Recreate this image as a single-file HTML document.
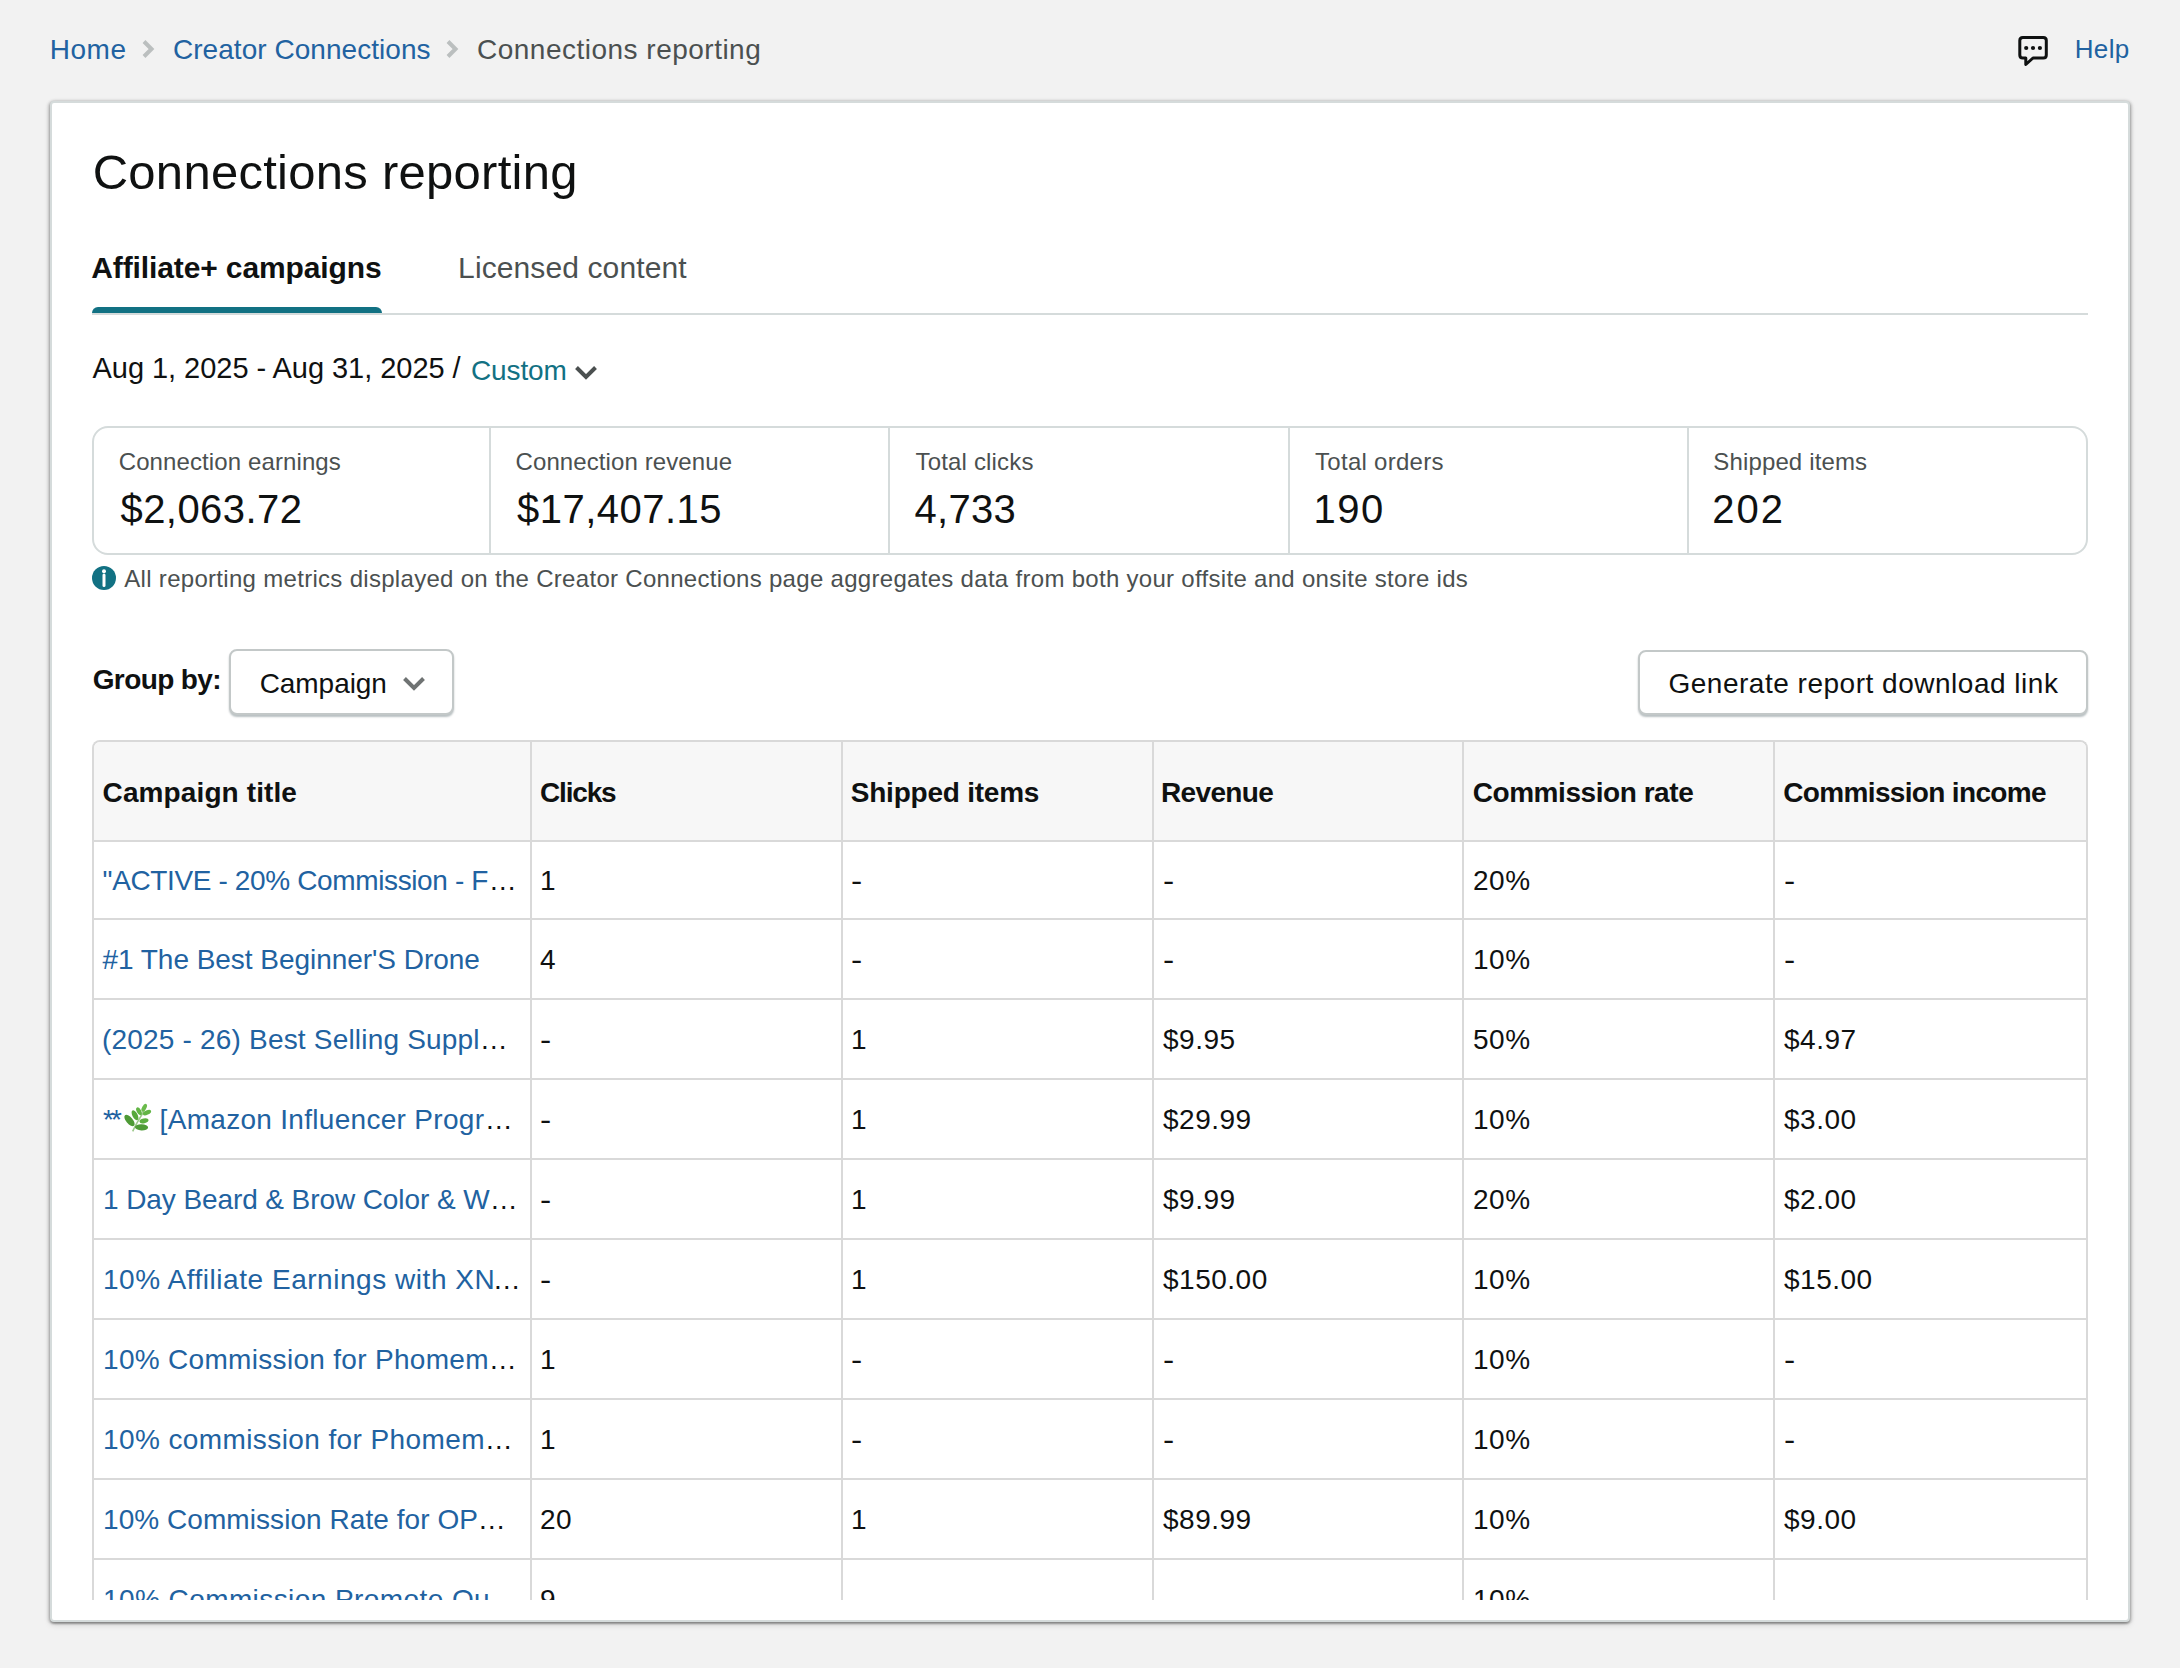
<!DOCTYPE html>
<html><head><meta charset="utf-8"><title>Connections reporting</title>
<style>
html,body{margin:0;padding:0}
body{width:2180px;height:1668px;background:#f2f2f2;position:relative;overflow:hidden;font-family:"Liberation Sans",sans-serif}
.t{position:absolute;white-space:pre}
.abs{position:absolute}
.card{position:absolute;left:50px;top:101px;width:2080px;height:1521px;box-sizing:border-box;border:2px solid #d5dbdb;border-radius:4px;background:#fff;box-shadow:0 2px 2px rgba(0,0,0,.24),2px 1px 3px rgba(0,0,0,.14),-2px 1px 3px rgba(0,0,0,.14),0 3px 6px rgba(0,0,0,.12),0 -1px 3px rgba(0,0,0,.1)}
.metrics{position:absolute;left:92px;top:426px;width:1996px;height:129px;box-sizing:border-box;border:2px solid #d5dbdb;border-radius:16px}
.mdiv{position:absolute;top:428px;width:2px;height:125px;background:#d5dbdb}
.tbl{position:absolute;left:92px;top:740px;width:1996px;height:860px;box-sizing:border-box;border:2px solid #d9d9d9;border-bottom:none;border-radius:8px 8px 0 0;overflow:hidden;background:#fff}
.thead{position:absolute;left:0;top:0;width:100%;height:98px;background:#f7f7f7}
.hl{position:absolute;left:0;width:100%;height:2px;background:#d9d9d9}
.vl{position:absolute;top:0;width:2px;height:100%;background:#d9d9d9}
.btn{position:absolute;box-sizing:border-box;border:2px solid #c3c8c8;border-radius:8px;background:#fff;box-shadow:0 2px 2px rgba(0,28,36,.28)}
</style></head><body>
<svg class="abs" style="left:141.3px;top:39px" width="14" height="20" viewBox="0 0 14 20"><path d="M3 2.5 L10.5 10 L3 17.5" fill="none" stroke="#bbbfbf" stroke-width="4" stroke-linecap="butt" stroke-linejoin="miter"/></svg>
<svg class="abs" style="left:445.3px;top:39px" width="14" height="20" viewBox="0 0 14 20"><path d="M3 2.5 L10.5 10 L3 17.5" fill="none" stroke="#bbbfbf" stroke-width="4" stroke-linecap="butt" stroke-linejoin="miter"/></svg>
<svg class="abs" style="left:2016px;top:34px" width="34" height="34" viewBox="0 0 34 34">
<path d="M6.8 3.5 H27.3 Q30.3 3.5 30.3 6.5 V21 Q30.3 24 27.3 24 H17 L9.8 30.5 V24 H6.8 Q3.8 24 3.8 21 V6.5 Q3.8 3.5 6.8 3.5 Z" fill="none" stroke="#0f1111" stroke-width="3" stroke-linejoin="round"/>
<circle cx="10.2" cy="14" r="2.1" fill="#0f1111"/><circle cx="17" cy="14" r="2.1" fill="#0f1111"/><circle cx="23.9" cy="14" r="2.1" fill="#0f1111"/>
</svg>
<div class="card"></div>
<div class="abs" style="left:92px;top:307px;width:290px;height:6px;background:#127183;border-radius:6px 6px 0 0"></div>
<div class="abs" style="left:92px;top:313px;width:1996px;height:2px;background:#d5dbdb"></div>
<svg class="abs" style="left:572.5px;top:363px" width="26" height="20" viewBox="0 0 26 20"><path d="M3.5 4.5 L13 14 L22.5 4.5" fill="none" stroke="#4b5050" stroke-width="4"/></svg>
<div class="metrics"></div>
<div class="mdiv" style="left:489px"></div>
<div class="mdiv" style="left:888px"></div>
<div class="mdiv" style="left:1288px"></div>
<div class="mdiv" style="left:1687px"></div>
<svg class="abs" style="left:92px;top:566px" width="24" height="24" viewBox="0 0 24 24"><circle cx="12" cy="12" r="12" fill="#127183"/><circle cx="12" cy="5.2" r="2" fill="#fff"/><path d="M12 9 V19.5" stroke="#fff" stroke-width="3" stroke-linecap="round"/></svg>
<div class="btn" style="left:229px;top:649px;width:225px;height:66px"></div>
<svg class="abs" style="left:399.5px;top:673px" width="28" height="22" viewBox="0 0 28 22"><path d="M4.5 5.5 L14 15 L23.5 5.5" fill="none" stroke="#6f7373" stroke-width="4"/></svg>
<div class="btn" style="left:1638px;top:650px;width:450px;height:65px"></div>
<div class="tbl">
<div class="thead"></div>
<div class="hl" style="top:98px"></div>
<div class="hl" style="top:176px"></div>
<div class="hl" style="top:256px"></div>
<div class="hl" style="top:336px"></div>
<div class="hl" style="top:416px"></div>
<div class="hl" style="top:496px"></div>
<div class="hl" style="top:576px"></div>
<div class="hl" style="top:656px"></div>
<div class="hl" style="top:736px"></div>
<div class="hl" style="top:816px"></div>
<div class="vl" style="left:436px"></div>
<div class="vl" style="left:747px"></div>
<div class="vl" style="left:1058px"></div>
<div class="vl" style="left:1368px"></div>
<div class="vl" style="left:1679px"></div>
</div>
<svg class="abs" style="left:120px;top:1100px" width="36" height="36" viewBox="0 0 36 36">
<path d="M12.7 31.3 Q16 24 22.7 13.4 L25.5 7" fill="none" stroke="#9cc98a" stroke-width="1.6"/>
<ellipse cx="9.5" cy="20.5" rx="7" ry="3.3" transform="rotate(50 9.5 20.5)" fill="#4e9a36"/>
<ellipse cx="21.5" cy="27.3" rx="6.6" ry="3.1" transform="rotate(2 21.5 27.3)" fill="#4f9b37"/>
<ellipse cx="15" cy="15.3" rx="5.4" ry="2.6" transform="rotate(62 15 15.3)" fill="#57a83c"/>
<ellipse cx="24" cy="20.8" rx="4.6" ry="2.4" transform="rotate(-12 24 20.8)" fill="#5cae40"/>
<ellipse cx="19" cy="11.3" rx="4.3" ry="2.2" transform="rotate(62 19 11.3)" fill="#62b545"/>
<ellipse cx="27" cy="12.6" rx="4.4" ry="2.2" transform="rotate(-25 27 12.6)" fill="#62b545"/>
<ellipse cx="24.2" cy="7.8" rx="4.3" ry="2.1" transform="rotate(-62 24.2 7.8)" fill="#6abb4b"/>
</svg>
<div class="abs" style="left:0;top:0;width:2180px;height:1600px;overflow:hidden">
<div class="t" style="left:49.7px;top:36px;font-size:28px;line-height:28px;color:#2162a1;letter-spacing:0.53px">Home</div>
<div class="t" style="left:173.0px;top:36px;font-size:28px;line-height:28px;color:#2162a1;letter-spacing:0.04px">Creator Connections</div>
<div class="t" style="left:477.0px;top:36px;font-size:28px;line-height:28px;color:#4b5050;letter-spacing:0.49px">Connections reporting</div>
<div class="t" style="left:2074.7px;top:36px;font-size:26px;line-height:26px;color:#2162a1;letter-spacing:0.37px">Help</div>
<div class="t" style="left:92.7px;top:148px;font-size:49px;line-height:49px;color:#0f1111;letter-spacing:0.27px">Connections reporting</div>
<div class="t" style="left:91.3px;top:253px;font-size:30px;line-height:30px;color:#0f1111;font-weight:700;letter-spacing:-0.12px">Affiliate+ campaigns</div>
<div class="t" style="left:458.1px;top:253px;font-size:30px;line-height:30px;color:#4b5050;letter-spacing:0.11px">Licensed content</div>
<div class="t" style="left:92.5px;top:354px;font-size:29px;line-height:29px;color:#0f1111;letter-spacing:-0.04px">Aug 1, 2025 - Aug 31, 2025 /</div>
<div class="t" style="left:471.0px;top:357px;font-size:28px;line-height:28px;color:#127183;letter-spacing:-0.12px">Custom</div>
<div class="t" style="left:118.7px;top:450px;font-size:24px;line-height:24px;color:#4b5050;letter-spacing:0.11px">Connection earnings</div>
<div class="t" style="left:120.5px;top:489px;font-size:40px;line-height:40px;color:#0f1111;letter-spacing:0.44px">$2,063.72</div>
<div class="t" style="left:515.5px;top:450px;font-size:24px;line-height:24px;color:#4b5050;letter-spacing:0.10px">Connection revenue</div>
<div class="t" style="left:517.0px;top:489px;font-size:40px;line-height:40px;color:#0f1111;letter-spacing:0.47px">$17,407.15</div>
<div class="t" style="left:915.6px;top:450px;font-size:24px;line-height:24px;color:#4b5050;letter-spacing:0.16px">Total clicks</div>
<div class="t" style="left:914.6px;top:489px;font-size:40px;line-height:40px;color:#0f1111;letter-spacing:0.28px">4,733</div>
<div class="t" style="left:1315.1px;top:450px;font-size:24px;line-height:24px;color:#4b5050;letter-spacing:0.27px">Total orders</div>
<div class="t" style="left:1313.5px;top:489px;font-size:40px;line-height:40px;color:#0f1111;letter-spacing:1.55px">190</div>
<div class="t" style="left:1713.3px;top:450px;font-size:24px;line-height:24px;color:#4b5050;letter-spacing:0.14px">Shipped items</div>
<div class="t" style="left:1712.3px;top:489px;font-size:40px;line-height:40px;color:#0f1111;letter-spacing:1.95px">202</div>
<div class="t" style="left:124.3px;top:567px;font-size:24px;line-height:24px;color:#4b5050;letter-spacing:0.30px">All reporting metrics displayed on the Creator Connections page aggregates data from both your offsite and onsite store ids</div>
<div class="t" style="left:92.7px;top:666px;font-size:28px;line-height:28px;color:#0f1111;font-weight:700;letter-spacing:-0.60px">Group by:</div>
<div class="t" style="left:259.7px;top:670px;font-size:28px;line-height:28px;color:#0f1111;letter-spacing:-0.06px">Campaign</div>
<div class="t" style="left:1668.5px;top:670px;font-size:28px;line-height:28px;color:#0f1111;letter-spacing:0.51px">Generate report download link</div>
<div class="t" style="left:102.6px;top:779px;font-size:28px;line-height:28px;color:#0f1111;font-weight:700;letter-spacing:0.11px">Campaign title</div>
<div class="t" style="left:540.0px;top:779px;font-size:28px;line-height:28px;color:#0f1111;font-weight:700;letter-spacing:-1.16px">Clicks</div>
<div class="t" style="left:850.8px;top:779px;font-size:28px;line-height:28px;color:#0f1111;font-weight:700;letter-spacing:-0.23px">Shipped items</div>
<div class="t" style="left:1161.0px;top:779px;font-size:28px;line-height:28px;color:#0f1111;font-weight:700;letter-spacing:-0.65px">Revenue</div>
<div class="t" style="left:1472.7px;top:779px;font-size:28px;line-height:28px;color:#0f1111;font-weight:700;letter-spacing:-0.44px">Commission rate</div>
<div class="t" style="left:1783.3px;top:779px;font-size:28px;line-height:28px;color:#0f1111;font-weight:700;letter-spacing:-0.66px">Commission income</div>
<div class="t" style="left:102.6px;top:867px;font-size:28px;line-height:28px;color:#2162a1;letter-spacing:-0.37px">"ACTIVE - 20% Commission - F</div>
<div class="t" style="left:488.8px;top:867px;font-size:28px;line-height:28px;color:#0f1111">…</div>
<div class="t" style="left:540.0px;top:867px;font-size:28px;line-height:28px;color:#0f1111;letter-spacing:0.50px">1</div>
<div class="t" style="left:851.0px;top:867px;font-size:28px;line-height:28px;color:#0f1111;transform:scaleX(1.2);transform-origin:0 0">-</div>
<div class="t" style="left:1163.0px;top:867px;font-size:28px;line-height:28px;color:#0f1111;transform:scaleX(1.2);transform-origin:0 0">-</div>
<div class="t" style="left:1473.0px;top:867px;font-size:28px;line-height:28px;color:#0f1111;letter-spacing:0.50px">20%</div>
<div class="t" style="left:1784.0px;top:867px;font-size:28px;line-height:28px;color:#0f1111;transform:scaleX(1.2);transform-origin:0 0">-</div>
<div class="t" style="left:102.5px;top:946px;font-size:28px;line-height:28px;color:#2162a1;letter-spacing:-0.04px">#1 The Best Beginner'S Drone</div>
<div class="t" style="left:540.0px;top:946px;font-size:28px;line-height:28px;color:#0f1111;letter-spacing:0.50px">4</div>
<div class="t" style="left:851.0px;top:946px;font-size:28px;line-height:28px;color:#0f1111;transform:scaleX(1.2);transform-origin:0 0">-</div>
<div class="t" style="left:1163.0px;top:946px;font-size:28px;line-height:28px;color:#0f1111;transform:scaleX(1.2);transform-origin:0 0">-</div>
<div class="t" style="left:1473.0px;top:946px;font-size:28px;line-height:28px;color:#0f1111;letter-spacing:0.50px">10%</div>
<div class="t" style="left:1784.0px;top:946px;font-size:28px;line-height:28px;color:#0f1111;transform:scaleX(1.2);transform-origin:0 0">-</div>
<div class="t" style="left:102.0px;top:1026px;font-size:28px;line-height:28px;color:#2162a1;letter-spacing:0.19px">(2025 - 26) Best Selling Suppl</div>
<div class="t" style="left:479.7px;top:1026px;font-size:28px;line-height:28px;color:#0f1111">…</div>
<div class="t" style="left:540.0px;top:1026px;font-size:28px;line-height:28px;color:#0f1111;transform:scaleX(1.2);transform-origin:0 0">-</div>
<div class="t" style="left:851.0px;top:1026px;font-size:28px;line-height:28px;color:#0f1111;letter-spacing:0.50px">1</div>
<div class="t" style="left:1163.0px;top:1026px;font-size:28px;line-height:28px;color:#0f1111;letter-spacing:0.50px">$9.95</div>
<div class="t" style="left:1473.0px;top:1026px;font-size:28px;line-height:28px;color:#0f1111;letter-spacing:0.50px">50%</div>
<div class="t" style="left:1784.0px;top:1026px;font-size:28px;line-height:28px;color:#0f1111;letter-spacing:0.50px">$4.97</div>
<div class="t" style="left:103.0px;top:1106px;font-size:28px;line-height:28px;color:#2162a1;letter-spacing:-3.00px">**</div>
<div class="t" style="left:159.6px;top:1106px;font-size:28px;line-height:28px;color:#2162a1;letter-spacing:0.30px">[Amazon Influencer Progr</div>
<div class="t" style="left:484.7px;top:1106px;font-size:28px;line-height:28px;color:#0f1111">…</div>
<div class="t" style="left:540.0px;top:1106px;font-size:28px;line-height:28px;color:#0f1111;transform:scaleX(1.2);transform-origin:0 0">-</div>
<div class="t" style="left:851.0px;top:1106px;font-size:28px;line-height:28px;color:#0f1111;letter-spacing:0.50px">1</div>
<div class="t" style="left:1163.0px;top:1106px;font-size:28px;line-height:28px;color:#0f1111;letter-spacing:0.50px">$29.99</div>
<div class="t" style="left:1473.0px;top:1106px;font-size:28px;line-height:28px;color:#0f1111;letter-spacing:0.50px">10%</div>
<div class="t" style="left:1784.0px;top:1106px;font-size:28px;line-height:28px;color:#0f1111;letter-spacing:0.50px">$3.00</div>
<div class="t" style="left:103.0px;top:1186px;font-size:28px;line-height:28px;color:#2162a1;letter-spacing:-0.09px">1 Day Beard &amp; Brow Color &amp; W</div>
<div class="t" style="left:489.8px;top:1186px;font-size:28px;line-height:28px;color:#0f1111">…</div>
<div class="t" style="left:540.0px;top:1186px;font-size:28px;line-height:28px;color:#0f1111;transform:scaleX(1.2);transform-origin:0 0">-</div>
<div class="t" style="left:851.0px;top:1186px;font-size:28px;line-height:28px;color:#0f1111;letter-spacing:0.50px">1</div>
<div class="t" style="left:1163.0px;top:1186px;font-size:28px;line-height:28px;color:#0f1111;letter-spacing:0.50px">$9.99</div>
<div class="t" style="left:1473.0px;top:1186px;font-size:28px;line-height:28px;color:#0f1111;letter-spacing:0.50px">20%</div>
<div class="t" style="left:1784.0px;top:1186px;font-size:28px;line-height:28px;color:#0f1111;letter-spacing:0.50px">$2.00</div>
<div class="t" style="left:103.0px;top:1266px;font-size:28px;line-height:28px;color:#2162a1;letter-spacing:0.54px">10% Affiliate Earnings with XN</div>
<div class="t" style="left:492.8px;top:1266px;font-size:28px;line-height:28px;color:#0f1111">…</div>
<div class="t" style="left:540.0px;top:1266px;font-size:28px;line-height:28px;color:#0f1111;transform:scaleX(1.2);transform-origin:0 0">-</div>
<div class="t" style="left:851.0px;top:1266px;font-size:28px;line-height:28px;color:#0f1111;letter-spacing:0.50px">1</div>
<div class="t" style="left:1163.0px;top:1266px;font-size:28px;line-height:28px;color:#0f1111;letter-spacing:0.50px">$150.00</div>
<div class="t" style="left:1473.0px;top:1266px;font-size:28px;line-height:28px;color:#0f1111;letter-spacing:0.50px">10%</div>
<div class="t" style="left:1784.0px;top:1266px;font-size:28px;line-height:28px;color:#0f1111;letter-spacing:0.50px">$15.00</div>
<div class="t" style="left:103.0px;top:1346px;font-size:28px;line-height:28px;color:#2162a1;letter-spacing:0.31px">10% Commission for Phomem</div>
<div class="t" style="left:488.8px;top:1346px;font-size:28px;line-height:28px;color:#0f1111">…</div>
<div class="t" style="left:540.0px;top:1346px;font-size:28px;line-height:28px;color:#0f1111;letter-spacing:0.50px">1</div>
<div class="t" style="left:851.0px;top:1346px;font-size:28px;line-height:28px;color:#0f1111;transform:scaleX(1.2);transform-origin:0 0">-</div>
<div class="t" style="left:1163.0px;top:1346px;font-size:28px;line-height:28px;color:#0f1111;transform:scaleX(1.2);transform-origin:0 0">-</div>
<div class="t" style="left:1473.0px;top:1346px;font-size:28px;line-height:28px;color:#0f1111;letter-spacing:0.50px">10%</div>
<div class="t" style="left:1784.0px;top:1346px;font-size:28px;line-height:28px;color:#0f1111;transform:scaleX(1.2);transform-origin:0 0">-</div>
<div class="t" style="left:103.0px;top:1426px;font-size:28px;line-height:28px;color:#2162a1;letter-spacing:0.40px">10% commission for Phomem</div>
<div class="t" style="left:484.7px;top:1426px;font-size:28px;line-height:28px;color:#0f1111">…</div>
<div class="t" style="left:540.0px;top:1426px;font-size:28px;line-height:28px;color:#0f1111;letter-spacing:0.50px">1</div>
<div class="t" style="left:851.0px;top:1426px;font-size:28px;line-height:28px;color:#0f1111;transform:scaleX(1.2);transform-origin:0 0">-</div>
<div class="t" style="left:1163.0px;top:1426px;font-size:28px;line-height:28px;color:#0f1111;transform:scaleX(1.2);transform-origin:0 0">-</div>
<div class="t" style="left:1473.0px;top:1426px;font-size:28px;line-height:28px;color:#0f1111;letter-spacing:0.50px">10%</div>
<div class="t" style="left:1784.0px;top:1426px;font-size:28px;line-height:28px;color:#0f1111;transform:scaleX(1.2);transform-origin:0 0">-</div>
<div class="t" style="left:103.0px;top:1506px;font-size:28px;line-height:28px;color:#2162a1;letter-spacing:0.06px">10% Commission Rate for OP</div>
<div class="t" style="left:477.7px;top:1506px;font-size:28px;line-height:28px;color:#0f1111">…</div>
<div class="t" style="left:540.0px;top:1506px;font-size:28px;line-height:28px;color:#0f1111;letter-spacing:0.50px">20</div>
<div class="t" style="left:851.0px;top:1506px;font-size:28px;line-height:28px;color:#0f1111;letter-spacing:0.50px">1</div>
<div class="t" style="left:1163.0px;top:1506px;font-size:28px;line-height:28px;color:#0f1111;letter-spacing:0.50px">$89.99</div>
<div class="t" style="left:1473.0px;top:1506px;font-size:28px;line-height:28px;color:#0f1111;letter-spacing:0.50px">10%</div>
<div class="t" style="left:1784.0px;top:1506px;font-size:28px;line-height:28px;color:#0f1111;letter-spacing:0.50px">$9.00</div>
<div class="t" style="left:103.0px;top:1586px;font-size:28px;line-height:28px;color:#2162a1;letter-spacing:0.42px">10% Commission Promote Ou</div>
<div class="t" style="left:485.0px;top:1586px;font-size:28px;line-height:28px;color:#0f1111">…</div>
<div class="t" style="left:540.0px;top:1586px;font-size:28px;line-height:28px;color:#0f1111;letter-spacing:0.50px">9</div>
<div class="t" style="left:851.0px;top:1586px;font-size:28px;line-height:28px;color:#0f1111;transform:scaleX(1.2);transform-origin:0 0">-</div>
<div class="t" style="left:1163.0px;top:1586px;font-size:28px;line-height:28px;color:#0f1111;transform:scaleX(1.2);transform-origin:0 0">-</div>
<div class="t" style="left:1473.0px;top:1586px;font-size:28px;line-height:28px;color:#0f1111;letter-spacing:0.50px">10%</div>
<div class="t" style="left:1784.0px;top:1586px;font-size:28px;line-height:28px;color:#0f1111;transform:scaleX(1.2);transform-origin:0 0">-</div>
</div>
</body></html>
